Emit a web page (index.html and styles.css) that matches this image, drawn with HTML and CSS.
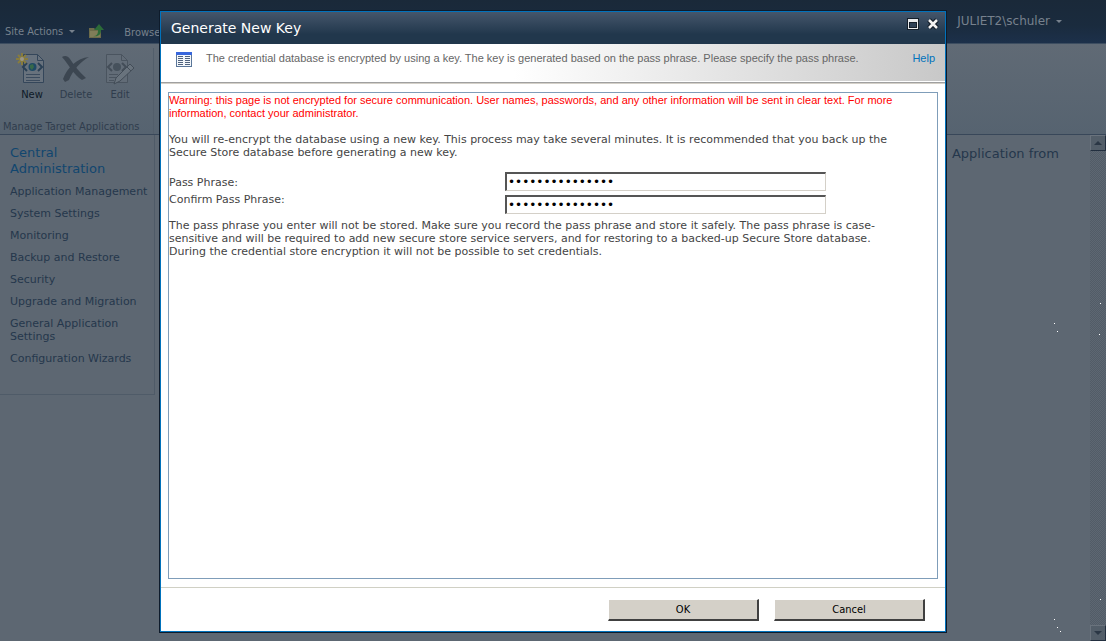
FILE: index.html
```html
<!DOCTYPE html>
<html lang="en">
<head>
<meta charset="utf-8">
<title>Generate New Key</title>
<link rel="stylesheet" href="styles.css">
</head>
<body>
<div class="page">
  <header class="topbar">
    <button class="menu site-actions" type="button">Site Actions <span class="caret"></span></button>
    <a class="nav-up" href="#" aria-label="Navigate up">
      <svg width="16" height="16" viewBox="0 0 16 16"><path d="M1 5h5l1 1h6v9H1z" fill="#6c6b4a"/><path d="M2 8h10v6H2z" fill="#807d59"/><path d="M5 13c4 0 5-2 5-6H6l5-6 5 6h-3c0 5-3 7-8 6z" fill="#2c6b38"/></svg>
    </a>
    <a class="tab" href="#">Browse</a>
    <button class="menu user" type="button">JULIET2\schuler <span class="caret"></span></button>
  </header>
  <section class="ribbon">
    <div class="group">
      <div class="tools">
        <button class="tool tool-on" type="button">
          <svg width="32" height="32" viewBox="0 0 32 32"><path d="M7.500 1.500h14l6 6v22h-20z" fill="#68727d" stroke="#34465a"/><path d="M21.500 1.500v6h6" fill="none" stroke="#34465a"/><path d="M11 10l-4 4 4 4M22 10l4 4-4 4" fill="none" stroke="#2a4055" stroke-width="2"/><circle cx="16.500" cy="14" r="4" fill="#1f4a66"/><path d="M14 12l3-1 1 3-2 3-2-2z" fill="#37694a"/><path d="M10 21.500h14M10 24.500h14M10 27.500h14" stroke="#3b4b5e"/><path d="M6 0v12M0 6h12M2 2l8 8M10 2l-8 8" stroke="#887c3d" stroke-width="2"/><circle cx="6" cy="6" r="2" fill="#99958a"/></svg>
          <span>New</span>
        </button>
        <button class="tool" type="button">
          <svg width="32" height="32" viewBox="0 0 32 32"><path d="M2 4c3-2 6-1 8 2 4 6 9 13 16 19l-4 2C14 22 9 12 2 4z" fill="#3c4651"/><path d="M29 4C21 8 13 17 9 27l-4 2-2-3C7 15 17 5 29 4z" fill="#3c4651"/></svg>
          <span>Delete</span>
        </button>
        <button class="tool" type="button">
          <svg width="32" height="32" viewBox="0 0 32 32"><path d="M2.500 1.500h15l6 6v22h-21z" fill="#626c77" stroke="#4a545f"/><path d="M17.500 1.500v6h6" fill="none" stroke="#4a545f"/><path d="M8 10l-4 4 4 4M18 10l4 4-4 4" fill="none" stroke="#434d58" stroke-width="2"/><circle cx="13" cy="14" r="4" fill="#46515c"/><path d="M5 21.500h9M5 24.500h7M5 27.500h5" stroke="#4a545f"/><path d="M10 31l2-6 14-14 4 4-14 13z" fill="#69737d" stroke="#424c57"/><path d="M23 14l4 4" stroke="#424c57"/></svg>
          <span>Edit</span>
        </button>
      </div>
      <div class="group-name">Manage Target Applications</div>
    </div>
  </section>
  <div class="work">
    <nav class="side">
      <a class="side-title" href="#">Central Administration</a>
      <a href="#">Application Management</a>
      <a href="#">System Settings</a>
      <a href="#">Monitoring</a>
      <a href="#">Backup and Restore</a>
      <a href="#">Security</a>
      <a href="#">Upgrade and Migration</a>
      <a href="#">General Application Settings</a>
      <a href="#">Configuration Wizards</a>
    </nav>
    <main class="content">Application from</main>
    <div class="scroll">
      <button type="button" aria-label="Scroll up"><span class="up"></span></button>
      <button type="button" aria-label="Scroll down"><span class="down"></span></button>
    </div>
  </div>
</div>
<svg class="specks" width="60" height="338" viewBox="0 0 60 338" aria-hidden="true"><path d="M8 20h1v1h-1zM11 28h1v1h-1zM54 0h1v1h-1zM53 31h1v1h-1zM8 316h1v1h-1zM11 324h1v1h-1zM14 328h1v1h-1zM54 296h1v1h-1z" fill="#fff"/></svg>

<div class="dialog" role="dialog" aria-labelledby="dialog-title">
  <div class="title">
    <h1 id="dialog-title">Generate New Key</h1>
    <button type="button" aria-label="Maximize"><svg width="12" height="12" viewBox="0 0 12 12"><path d="M0 0h12v12H0z" fill="#141e29"/><path d="M1 1h10v10H1z" fill="#e8eaec"/><path d="M2 4h8v6H2z" fill="#141e29"/><path d="M3 5h6v4H3z" fill="#2d4055"/></svg></button>
    <button type="button" aria-label="Close"><svg width="12" height="12" viewBox="0 0 12 12"><path d="M2 2l8 8M10 2l-8 8" stroke="#141e29" stroke-width="5"/><path d="M2 2l8 8M10 2l-8 8" stroke="#f2f2f2" stroke-width="2.500"/></svg></button>
  </div>
  <div class="intro">
    <svg width="16" height="15" viewBox="0 0 16 15"><path d="M0 0h16v15H0z" fill="#5a7699"/><path d="M0 0h16v3H0z" fill="#3867dc"/><path d="M1 3h14v11H1z" fill="#f4f7fb"/><path d="M2 4.500h5M2 6.500h5M2 8.500h5M2 10.500h5M2 12.500h5M9 4.500h5M9 6.500h5M9 8.500h5M9 10.500h5M9 12.500h5" stroke="#51647e"/></svg>
    <p>The credential database is encrypted by using a key. The key is generated based on the pass phrase. Please specify the pass phrase.</p>
    <a href="#">Help</a>
  </div>
  <form class="form">
    <div class="body">
      <p class="warning">Warning: this page is not encrypted for secure communication. User names, passwords, and any other information will be sent in clear text. For more<br>information, contact your administrator.</p>
      <p class="lead">You will re-encrypt the database using a new key. This process may take several minutes. It is recommended that you back up the<br>Secure Store database before generating a new key.</p>
      <div class="fields">
        <div class="labels"><label for="pass">Pass Phrase:</label><label for="confirm">Confirm Pass Phrase:</label></div>
        <div class="inputs"><input id="pass" type="password" value="passphrase12345"><input id="confirm" type="password" value="passphrase12345"></div>
      </div>
      <p class="note">The pass phrase you enter will not be stored. Make sure you record the pass phrase and store it safely. The pass phrase is case-<br>sensitive and will be required to add new secure store service servers, and for restoring to a backed-up Secure Store database.<br>During the credential store encryption it will not be possible to set credentials.</p>
    </div>
    <div class="actions">
      <button type="button">OK</button>
      <button type="button">Cancel</button>
    </div>
  </form>
</div>
</body>
</html>
```

FILE: styles.css
```css
* { box-sizing: border-box; }
body {
  margin: 0;
  font: 11px/13px "DejaVu Sans", Verdana, sans-serif;
  color: #444;
}
a { text-decoration: none; color: inherit; }
button { font: inherit; color: inherit; padding: 0; border: 0; background: none; }
p, h1 { margin: 0; font-weight: normal; }
svg { display: block; flex: none; }

.page {
  display: flex;
  flex-direction: column;
  min-height: 100vh;
  background: #5d6772;
  color: #25374c;
}
.topbar {
  display: flex;
  align-items: flex-end;
  height: 44px;
  padding: 0 44px 4px 5px;
  background: linear-gradient(#1a2939, #1a2b3e 60%, #1c304a);
  border-bottom: 1px solid #3c4d60;
  color: #77818d;
  font-family: "DejaVu Sans Condensed", Tahoma, sans-serif;
}
.menu { display: flex; align-items: center; gap: 6px; white-space: nowrap; }
.site-actions { margin-bottom: 1px; }
.user { margin: 0 0 11px auto; font-family: "DejaVu Sans", Verdana, sans-serif; font-size: 12px; }
.caret { border: 3px solid transparent; border-top-color: currentColor; border-bottom: 0; }
.nav-up { margin: 0 20px 0 13px; }

.ribbon {
  display: flex;
  height: 91px;
  background: linear-gradient(#606a75, #566370);
  border-bottom: 1px solid #384759;
}
.group {
  display: flex;
  flex-direction: column;
  justify-content: space-between;
  width: 154px;
  margin: 4px 0 0;
  border-right: 1px solid #525e6b;
  font-family: "DejaVu Sans Condensed", Tahoma, sans-serif;
}
.tools { display: flex; padding: 5px 0 0 10px; }
.tool { display: flex; flex-direction: column; align-items: center; gap: 3px; width: 44px; color: #303d4d; }
.tool-on { color: #0d1927; }
.group-name { padding: 0 0 1px 3px; white-space: nowrap; color: #303d4d; }

.work { display: flex; flex: 1; align-items: stretch; }
.side {
  display: flex;
  flex-direction: column;
  align-self: flex-start;
  gap: 9px;
  width: 155px;
  min-height: 260px;
  padding: 10px 0 0 10px;
  border: solid #4f5b68;
  border-width: 0 1px 1px 0;
}
.side-title { font-size: 13px; line-height: 16px; color: #11466f; margin-bottom: -1px; }
.content {
  flex: 1;
  padding: 11px 31px;
  font-size: 13px;
  line-height: 16px;
  text-align: right;
}
.scroll {
  display: flex;
  flex-direction: column;
  justify-content: space-between;
  width: 16px;
  background: repeating-conic-gradient(#5d6772 0 25%, #525c67 0 50%) 0 0 / 2px 2px;
}
.scroll button {
  display: grid;
  place-items: center;
  height: 16px;
  background: #535e69;
  border: 1px solid;
  border-color: #6a737d #222f3f #222f3f #6a737d;
}
.up, .down { border: 4px solid transparent; }
.up { border-top: 0; border-bottom-color: #2b3745; }
.down { border-bottom: 0; border-top-color: #2b3745; }
.specks { position: absolute; right: 0; bottom: 0; pointer-events: none; }

.dialog {
  position: absolute;
  inset: 10px 159px 8px;
  display: flex;
  flex-direction: column;
  background: #fff;
  border: 1px solid #0e1b2b;
  box-shadow: inset 0 0 0 1px #0072bc;
  padding: 1px;
}
.title {
  display: flex;
  align-items: center;
  gap: 8px;
  height: 32px;
  padding: 0 6px 0 10px;
  background: linear-gradient(#45566b, #21374c 70%, #21374c);
}
.title h1 { flex: 1; font-size: 14px; line-height: 18px; color: #fff; }
.title button { margin-bottom: 8px; }
.intro {
  display: flex;
  align-items: flex-start;
  gap: 14px;
  height: 38px;
  padding: 8px 10px 0 15px;
  background: linear-gradient(90deg, #fff 45%, #c8c8c8);
  border: solid #fff;
  border-width: 0 0 1px;
  color: #666;
  font-family: "Liberation Sans", Tahoma, sans-serif;
}
.intro p { flex: 1; white-space: nowrap; }
.intro a { color: #0072bc; }
.form {
  display: flex;
  flex: 1;
  flex-direction: column;
  border-top: 1px solid #a0a0a0;
  box-shadow: inset 0 1px #d4d0c8;
}
.body {
  flex: 1;
  margin: 9px 7px 8px;
  border: 1px solid #7f9db9;
  white-space: nowrap;
}
.warning { padding-top: 1px; color: #f00; font-family: "Liberation Sans", Tahoma, sans-serif; }
.lead { margin: 13px 0; }
.fields { display: flex; height: 47px; }
.labels { display: flex; flex-direction: column; gap: 4px; width: 336px; padding-top: 4px; }
.inputs { display: flex; flex-direction: column; gap: 4px; }
.inputs input {
  width: 321px;
  height: 19px;
  padding: 0 1px;
  border: solid;
  border-width: 2px 1px 1px 2px;
  border-color: #555 #d4d0c8 #d4d0c8 #555;
  font: 12px/14px "DejaVu Sans", sans-serif;
  color: #000;
}
.actions {
  display: flex;
  justify-content: flex-end;
  gap: 15px;
  padding: 11px 20px 10px;
  border-top: 1px solid #d0d0c4;
}
.actions button {
  width: 151px;
  height: 22px;
  background: #d4d0c8;
  border: solid;
  border-width: 1px 2px 2px 1px;
  border-color: #fff #404040 #404040 #fff;
  color: #000;
  font-family: "DejaVu Sans Condensed", Tahoma, sans-serif;
}
```
